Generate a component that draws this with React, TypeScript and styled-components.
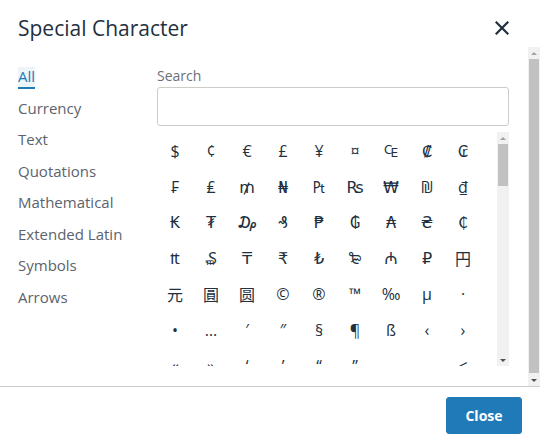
import React from "react";
import styled, { createGlobalStyle } from "styled-components";

const GlobalStyle = createGlobalStyle`
  html, body {
    margin: 0;
    padding: 0;
    background: #fff;
  }
  body {
    font-family: "Open Sans", "Noto Sans", sans-serif;
    color: #222f3e;
  }
`;

const Dialog = styled.div`
  width: 540px;
  height: 444px;
  display: flex;
  flex-direction: column;
  background: #fff;
  overflow: hidden;
`;

const Header = styled.div`
  height: 47px;
  box-sizing: border-box;
  padding: 9px 31px 0 18px;
  display: flex;
  align-items: center;
  justify-content: space-between;
`;

const Title = styled.h1`
  margin: 0;
  font-size: 21px;
  font-weight: 400;
  line-height: 26px;
  color: #222f3e;
`;

const CloseX = styled.button`
  width: 14px;
  height: 14px;
  padding: 0;
  border: 0;
  background: none;
  display: flex;
  cursor: pointer;
`;

const Body = styled.div`
  height: 339px;
  display: flex;
  flex-direction: row;
`;

const Content = styled.div`
  flex: 1;
  box-sizing: border-box;
  padding: 14px 19px 0 18px;
  display: flex;
  flex-direction: row;
  overflow: hidden;
`;

const Nav = styled.div`
  width: 139px;
  flex-shrink: 0;
  display: flex;
  flex-direction: column;
`;

const NavItem = styled.div<{ $active?: boolean }>`
  height: 31.5px;
  box-sizing: border-box;
  padding-top: 6px;
  font-size: 15px;
  line-height: 19.5px;
  color: ${({ $active }) => ($active ? "#207ab7" : "#5b636c")};
  span {
    display: inline-block;
    border-bottom: 2px solid
      ${({ $active }) => ($active ? "#207ab7" : "transparent")};
    background: ${({ $active }) =>
      $active ? "rgba(32, 122, 183, 0.08)" : "transparent"};
  }
`;

const Panel = styled.div`
  width: 352px;
  display: flex;
  flex-direction: column;
`;

const Label = styled.label`
  display: block;
  padding-top: 6px;
  font-size: 14px;
  line-height: 18px;
  color: #6a7079;
  margin-bottom: 2px;
`;

const SearchInput = styled.input`
  box-sizing: border-box;
  width: 352px;
  height: 39px;
  border: 1px solid #cccccc;
  border-radius: 3px;
  outline: none;
  padding: 0 8px;
  font-size: 14px;
`;

const GridWrap = styled.div`
  margin-top: 6px;
  height: 234px;
  display: flex;
  flex-direction: row;
`;

const CharGrid = styled.div`
  flex: 1;
  overflow: hidden;
  display: grid;
  grid-template-columns: repeat(9, 36px);
  grid-auto-rows: 35.8px;
  align-content: start;
  padding-top: 1px;
`;

const CharCell = styled.div`
  display: flex;
  align-items: center;
  justify-content: center;
  font-family: "Open Sans", "DejaVu Sans", "Noto Sans", "Noto Sans CJK SC",
    sans-serif;
  font-size: 16px;
  color: #222f3e;
  cursor: pointer;
`;

const Track = styled.div<{ $width: number }>`
  width: ${({ $width }) => $width}px;
  flex-shrink: 0;
  background: #f1f1f1;
  display: flex;
  flex-direction: column;
`;

const ArrowBox = styled.div<{ $up?: boolean; $dim?: boolean }>`
  height: 12px;
  flex-shrink: 0;
  display: flex;
  align-items: center;
  justify-content: center;
  &::after {
    content: "";
    width: 0;
    height: 0;
    border-left: 3px solid transparent;
    border-right: 3px solid transparent;
    ${({ $up, $dim }) =>
      $up
        ? `border-bottom: 3px solid ${$dim ? "#a3a3a3" : "#505050"};`
        : `border-top: 3px solid ${$dim ? "#a3a3a3" : "#505050"};`}
  }
`;

const ThumbArea = styled.div`
  flex: 1;
  display: flex;
  flex-direction: column;
  padding: 0 1px;
`;

const Thumb = styled.div`
  background: #c1c1c1;
`;

const Footer = styled.div`
  flex: 1;
  border-top: 1px solid #cccccc;
  display: flex;
  align-items: center;
  justify-content: flex-end;
  padding: 0 18px;
`;

const Button = styled.button`
  width: 76px;
  height: 37px;
  padding: 0;
  border: 1px solid #207ab7;
  border-radius: 3px;
  background: #207ab7;
  color: #fff;
  font-family: "Open Sans", "Noto Sans", sans-serif;
  font-size: 14px;
  font-weight: 700;
  cursor: pointer;
`;

const categories = [
  "All",
  "Currency",
  "Text",
  "Quotations",
  "Mathematical",
  "Extended Latin",
  "Symbols",
  "Arrows",
];

const chars = [
  "$", "¢", "€", "£", "¥", "¤", "₠", "₡", "₢",
  "₣", "₤", "₥", "₦", "₧", "₨", "₩", "₪", "₫",
  "₭", "₮", "₯", "₰", "₱", "₲", "₳", "₴", "₵",
  "₶", "₷", "₸", "₹", "₺", "₻", "₼", "₽", "円",
  "元", "圓", "圆", "©", "®", "™", "‰", "µ", "·",
  "•", "…", "′", "″", "§", "¶", "ß", "‹", "›",
  "«", "»", "‘", "’", "“", "”", "‚", "„", "<",
  ">", "≤", "≥", "–", "—", "¯", "‾", "¤", "¦",
];

const ScrollBar: React.FC<{ width: number; thumb: number; dim?: boolean }> = ({
  width,
  thumb,
  dim,
}) => (
  <Track $width={width}>
    <ArrowBox $up $dim={dim} />
    <ThumbArea>
      <Thumb style={{ height: thumb }} />
    </ThumbArea>
    <ArrowBox />
  </Track>
);

export default function App() {
  return (
    <>
      <GlobalStyle />
      <Dialog>
        <Header>
          <Title>Special Character</Title>
          <CloseX aria-label="Close">
            <svg width="14" height="14" viewBox="0 0 14 14">
              <path
                d="M1.5 1.5 L12.5 12.5 M12.5 1.5 L1.5 12.5"
                stroke="#222f3e"
                strokeWidth="2.2"
                strokeLinecap="square"
              />
            </svg>
          </CloseX>
        </Header>
        <Body>
          <Content>
            <Nav>
              {categories.map((c, idx) => (
                <NavItem key={c} $active={idx === 0}>
                  <span>{c}</span>
                </NavItem>
              ))}
            </Nav>
            <Panel>
              <Label>Search</Label>
              <SearchInput />
              <GridWrap>
                <CharGrid>
                  {chars.map((ch, idx) => (
                    <CharCell key={`ch ${idx}`}>{ch}</CharCell>
                  ))}
                </CharGrid>
                <ScrollBar width={12} thumb={42} dim />
              </GridWrap>
            </Panel>
          </Content>
          <ScrollBar width={12} thumb={314} dim />
        </Body>
        <Footer>
          <Button>Close</Button>
        </Footer>
      </Dialog>
    </>
  );
}
